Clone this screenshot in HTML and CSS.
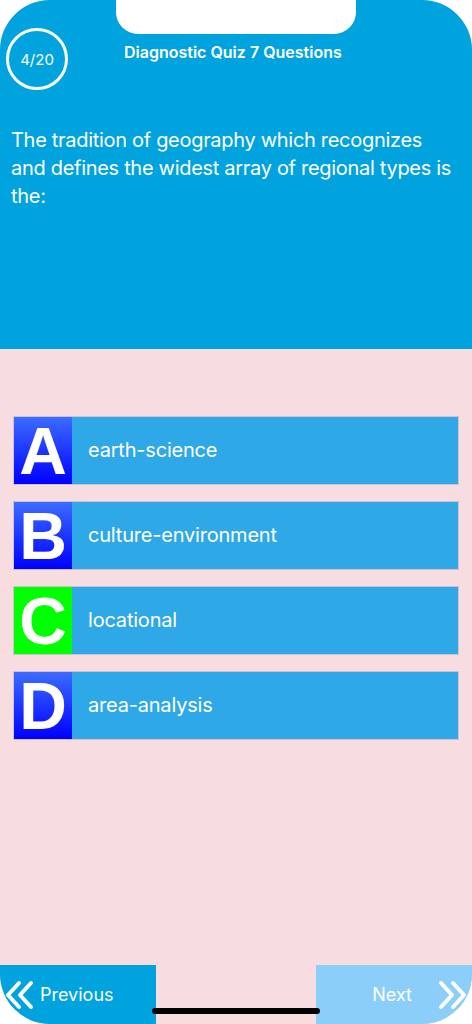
FILE: index.html
```html
<!DOCTYPE html>
<html lang="en">
<head>
    <meta charset="UTF-8">
    <title>Diagnostic Quiz</title>
    <link rel="stylesheet" href="styles.css">
</head>
<body>
    <div class="screen">
        <div class="notch"></div>
        <div class="header">
            <div class="top-row">
                <div class="counter">4/20</div>
                <div class="title">Diagnostic Quiz 7 Questions</div>
            </div>
            <div class="question">The tradition of geography which recognizes and defines the widest array of regional types is the:</div>
        </div>

        <div class="options">
            <div class="option"><div class="letter">A</div><div class="answer">earth-science</div></div>
            <div class="option"><div class="letter">B</div><div class="answer">culture-environment</div></div>
            <div class="option"><div class="letter correct">C</div><div class="answer">locational</div></div>
            <div class="option"><div class="letter">D</div><div class="answer">area-analysis</div></div>
        </div>

        <div class="footer">
            <button class="nav prev">
                <svg width="30" height="30" viewBox="0 0 30 30"><path d="M15 3 L4 15 L15 27 M27 3 L16 15 L27 27" fill="none" stroke="#fff" stroke-width="4" stroke-linecap="round" stroke-linejoin="round"/></svg>
                Previous
            </button>
            <button class="nav next">
                Next
                <svg width="30" height="30" viewBox="0 0 30 30"><path d="M3 3 L14 15 L3 27 M15 3 L26 15 L15 27" fill="none" stroke="#fff" stroke-width="4" stroke-linecap="round" stroke-linejoin="round"/></svg>
            </button>
        </div>
        <div class="home-bar"></div>
    </div>
</body>
</html>
```

FILE: styles.css
```css
body {
    margin: 0;
    background: #fff;
    font-family: Inter, Roboto, "Liberation Sans", sans-serif;
}
.screen {
    position: relative;
    width: 472px;
    height: 1024px;
    background: #f7dde0;
    border-radius: 50px;
    overflow: hidden;
    display: flex;
    flex-direction: column;
}
.notch {
    position: absolute;
    top: 0;
    left: 116px;
    width: 240px;
    height: 34px;
    background: #fff;
    border-radius: 0 0 22px 22px;
}
.header {
    background: #00a3dd;
    height: 349px;
    color: #fff;
    box-sizing: border-box;
    padding-top: 28px;
}
.top-row {
    display: flex;
    align-items: center;
    padding-left: 6px;
}
.counter {
    width: 62px;
    height: 62px;
    box-sizing: border-box;
    border: 3px solid #fff;
    border-radius: 50%;
    display: flex;
    align-items: center;
    justify-content: center;
    font-size: 15px;
}
.title {
    margin-left: 56px;
    margin-top: -14px;
    font-size: 16px;
    font-weight: 600;
}
.question {
    margin-top: 36px;
    padding: 0 11px;
    font-size: 20px;
    line-height: 28px;
    letter-spacing: -0.3px;
}
.options {
    padding: 68px 14px 0;
    display: flex;
    flex-direction: column;
    gap: 18px;
}
.option {
    display: flex;
    height: 67px;
    background: #2ea8e6;
    box-shadow: 0 0 0 1px #d2bfd4;
}
.letter {
    width: 58px;
    background: linear-gradient(#3b6cff, #0000ff);
    color: #fff;
    font-family: "Liberation Sans", Arial, sans-serif;
    font-weight: bold;
    font-size: 66px;
    line-height: 68px;
    text-align: center;
}
.letter.correct {
    background: #00ff00;
}
.answer {
    color: #fff;
    font-size: 20px;
    line-height: 67px;
    padding-left: 16px;
    letter-spacing: -0.2px;
}
.footer {
    margin-top: auto;
    display: flex;
    justify-content: space-between;
    height: 59px;
}
.nav {
    width: 156px;
    border: none;
    color: #fff;
    font-family: Inter, Roboto, "Liberation Sans", sans-serif;
    font-size: 18px;
    display: flex;
    align-items: center;
    gap: 6px;
    padding: 0 4px;
}
.prev {
    background: #00a3dd;
}
.next {
    background: #8acef9;
    justify-content: flex-end;
    gap: 26px;
}
.home-bar {
    position: absolute;
    left: 152px;
    bottom: 10px;
    width: 168px;
    height: 6px;
    border-radius: 3px;
    background: #000;
}
```
